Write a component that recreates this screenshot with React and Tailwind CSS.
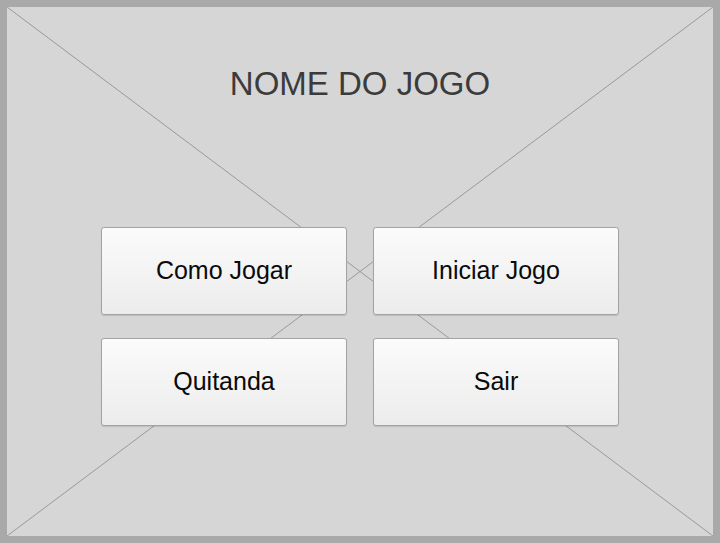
import React from 'react';

const buttons = ['Como Jogar', 'Iniciar Jogo', 'Quitanda', 'Sair'];

const MenuButton = ({ label }) => (
  <button className="h-[88px] w-full rounded-[3px] border border-[#a3a3a3] bg-gradient-to-b from-[#fbfbfb] to-[#ececec] text-[25px] text-[#0a0a0a] shadow-[0_1px_1px_rgba(0,0,0,0.12)]">
    {label}
  </button>
);

export default function App() {
  return (
    <div
      className="h-[543px] w-[720px] bg-[#a9a9a9] p-[7px]"
      style={{ fontFamily: '"Liberation Sans", Arial, sans-serif' }}
    >
      <div className="relative h-full w-full bg-[#d6d6d6]">
        {/* wireframe placeholder cross */}
        <svg className="absolute inset-0 h-full w-full" viewBox="0 0 100 100" preserveAspectRatio="none">
          <line x1="0" y1="0" x2="100" y2="100" stroke="#999" strokeWidth="1" vectorEffect="non-scaling-stroke" />
          <line x1="100" y1="0" x2="0" y2="100" stroke="#999" strokeWidth="1" vectorEffect="non-scaling-stroke" />
        </svg>

        <div className="relative flex flex-col items-center pt-[56px]">
          <h1 className="flex h-[40px] items-center text-[33px] leading-none text-[#3b3b3b]">NOME DO JOGO</h1>

          <div className="mt-[124px] grid w-[518px] grid-cols-2 gap-x-[26px] gap-y-[23px]">
            {buttons.map((b) => (
              <MenuButton key={b} label={b} />
            ))}
          </div>
        </div>
      </div>
    </div>
  );
}
